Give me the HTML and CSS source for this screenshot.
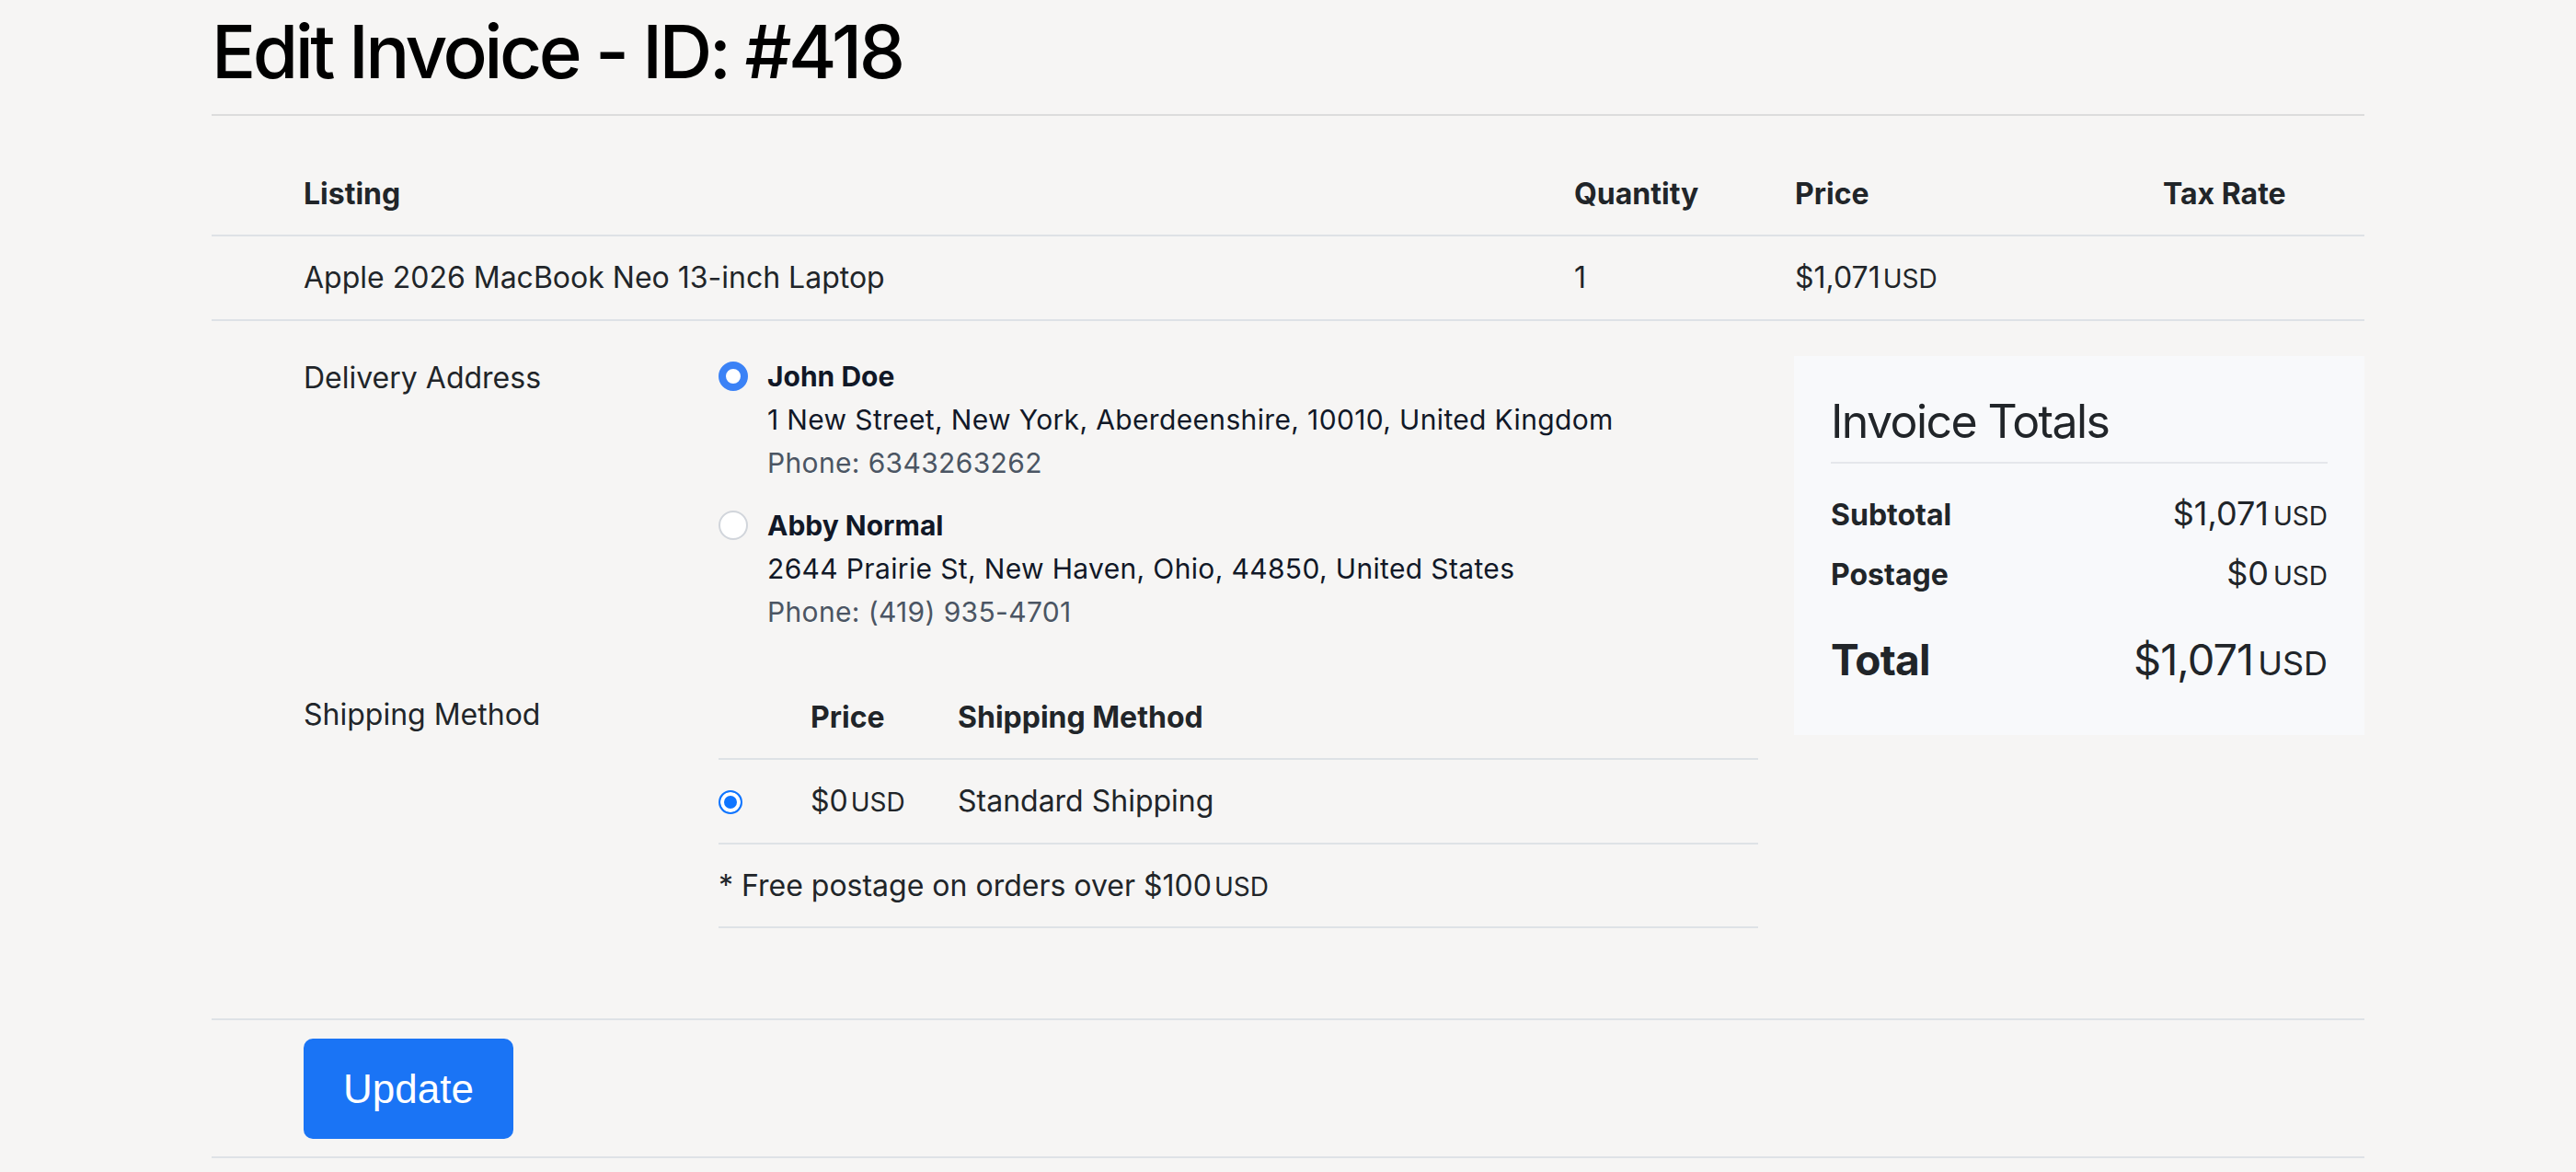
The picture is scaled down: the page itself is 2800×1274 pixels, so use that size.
FILE: index.html
```html
<!DOCTYPE html>
<html lang="en">
<head>
<meta charset="utf-8">
<title>Edit Invoice - ID: #418</title>
<link rel="stylesheet" href="styles.css">
</head>
<body>
<main class="page">
  <h1 class="page-title">Edit Invoice - ID: #418</h1>

  <div class="items">
    <div class="items-row items-head">
      <div></div>
      <div>Listing</div>
      <div>Quantity</div>
      <div>Price</div>
      <div>Tax Rate</div>
    </div>
    <div class="items-row">
      <div></div>
      <div>Apple 2026 MacBook Neo 13-inch Laptop</div>
      <div>1</div>
      <div><span class="amt">$1,071</span><span class="cur">USD</span></div>
      <div></div>
    </div>
  </div>

  <section class="details">
    <div class="details-main">
      <div class="field">
        <div class="field-label">Delivery Address</div>
        <div class="addresses">
          <label class="address">
            <input class="addr-radio" type="radio" name="address" checked>
            <span class="addr-body">
              <span class="addr-name">John Doe</span>
              <span class="addr-line">1 New Street, New York, Aberdeenshire, 10010, United Kingdom</span>
              <span class="addr-phone">Phone: 6343263262</span>
            </span>
          </label>
          <label class="address">
            <input class="addr-radio" type="radio" name="address">
            <span class="addr-body">
              <span class="addr-name">Abby Normal</span>
              <span class="addr-line">2644 Prairie St, New Haven, Ohio, 44850, United States</span>
              <span class="addr-phone">Phone: (419) 935-4701</span>
            </span>
          </label>
        </div>
      </div>

      <div class="field field-shipping">
        <div class="field-label field-label-ship">Shipping Method</div>
        <div class="ship">
          <div class="ship-row ship-head">
            <div></div>
            <div>Price</div>
            <div>Shipping Method</div>
          </div>
          <div class="ship-row">
            <div class="ship-check"><input class="ship-radio" type="radio" name="shipping" checked></div>
            <div><span class="amt">$0</span><span class="cur">USD</span></div>
            <div>Standard Shipping</div>
          </div>
          <div class="ship-note">* Free postage on orders over <span class="amt">$100</span><span class="cur">USD</span></div>
        </div>
      </div>
    </div>

    <aside class="totals">
      <h3 class="totals-title">Invoice Totals</h3>
      <div class="totals-row totals-first">
        <span class="totals-label">Subtotal</span>
        <span class="totals-value"><span class="amt">$1,071</span><span class="cur">USD</span></span>
      </div>
      <div class="totals-row">
        <span class="totals-label">Postage</span>
        <span class="totals-value"><span class="amt">$0</span><span class="cur">USD</span></span>
      </div>
      <div class="totals-row totals-grand">
        <span class="totals-label">Total</span>
        <span class="totals-value"><span class="amt">$1,071</span><span class="cur">USD</span></span>
      </div>
    </aside>
  </section>

  <div class="actions">
    <button class="btn-update" type="button">Update</button>
  </div>
</main>
</body>
</html>
```

FILE: styles.css
```css
html, body {
  margin: 0;
  padding: 0;
  background: #f6f5f4;
}

body {
  font-family: Inter, "Noto Sans", sans-serif;
  font-size: 32px;
  line-height: 48px;
  color: #212529;
}

.page {
  width: 2340px;
  margin: 0 0 0 230px;
}

.page-title {
  margin: 0;
  padding: 8px 0 20px;
  font-family: Inter, sans-serif;
  font-size: 80px;
  line-height: 96px;
  font-weight: 500;
  color: #000;
  border-bottom: 2px solid #dcdcdc;
  letter-spacing: -3.5px;
}

/* items table */
.items {
  margin-top: 40px;
}

.items-row {
  display: grid;
  grid-template-columns: 100px 1381px 240px 400px 219px;
  padding: 21px 0 20px;
  border-bottom: 2px solid #dee2e6;
}

.items-head {
  font-weight: 700;
}

.cur {
  font-size: 28px;
  margin-left: 3px;
}

/* details */
.details {
  display: flex;
  align-items: flex-start;
  margin-top: 38px;
}

.details-main {
  width: 1581px;
  padding-left: 100px;
}

.field {
  display: grid;
  grid-template-columns: 451px 1130px;
}

.field-label {
  color: #212529;
}

.field-label-ship {
  padding-top: 18px;
}

.addresses {
  display: flex;
  flex-direction: column;
  gap: 22px;
}

.address {
  display: flex;
  align-items: flex-start;
  gap: 21px;
  cursor: pointer;
}

.addr-radio {
  appearance: none;
  -webkit-appearance: none;
  margin: 6px 0 0;
  width: 32px;
  height: 32px;
  flex: none;
  border-radius: 50%;
  background: #fff;
  border: 2px solid #d1d5db;
}

.addr-radio:checked {
  border: 8px solid #3b82f6;
  background: #fff;
}

.addr-body {
  display: flex;
  flex-direction: column;
  margin-top: -1px;
  font-size: 30px;
  line-height: 47px;
  letter-spacing: 0.35px;
  color: #111827;
}

.addr-name {
  font-weight: 700;
  letter-spacing: 0;
}

.addr-phone {
  color: #4b5563;
}

.field-shipping {
  margin-top: 46px;
}

.ship-row {
  display: grid;
  grid-template-columns: 100px 160px 1fr;
  padding: 21px 0 20px;
  border-bottom: 2px solid #dee2e6;
}

.ship-head {
  font-weight: 700;
}

.ship-check {
  display: flex;
  align-items: center;
}

.ship-radio {
  appearance: none;
  -webkit-appearance: none;
  margin: 0;
  width: 26px;
  height: 26px;
  border-radius: 50%;
  border: 2px solid #0f75ff;
  background: #0f75ff;
  box-shadow: inset 0 0 0 4px #fff;
}

.ship-note {
  padding: 21px 0 19px;
  border-bottom: 2px solid #dee2e6;
}

/* totals */
.totals {
  width: 540px;
  margin-left: 39px;
  padding: 40px 40px 47px;
  background: #f8f9fb;
  color: #212529;
}

.totals-title {
  margin: 0;
  padding-bottom: 13px;
  font-size: 50px;
  line-height: 62px;
  font-weight: 400;
  letter-spacing: -1.6px;
  border-bottom: 2px solid #e5e7eb;
}

.totals-row {
  display: flex;
  justify-content: space-between;
  align-items: baseline;
  margin-top: 14px;
  line-height: 48px;
}

.totals-first {
  margin-top: 30px;
}

.totals-label {
  font-weight: 700;
}

.totals-value .amt {
  font-size: 36px;
}

.totals-value .cur {
  font-size: 28px;
  margin-left: 5px;
}

.totals-grand {
  margin-top: 38px;
  line-height: 58px;
}

.totals-grand .totals-label {
  font-size: 46px;
  letter-spacing: -0.8px;
}

.totals-grand .amt {
  font-size: 47px;
  letter-spacing: -1px;
}

.totals-grand .cur {
  font-size: 36px;
}

/* actions */
.actions {
  margin-top: 98px;
  padding: 20px 0 19px 100px;
  border-top: 2px solid #dee2e6;
  border-bottom: 2px solid #dee2e6;
}

.btn-update {
  display: block;
  height: 109px;
  padding: 0 43px;
  border: 0;
  border-radius: 10px;
  background: #1a74f5;
  color: #fff;
  font-family: "Liberation Sans", Arial, sans-serif;
  font-size: 44px;
  cursor: pointer;
}
```
